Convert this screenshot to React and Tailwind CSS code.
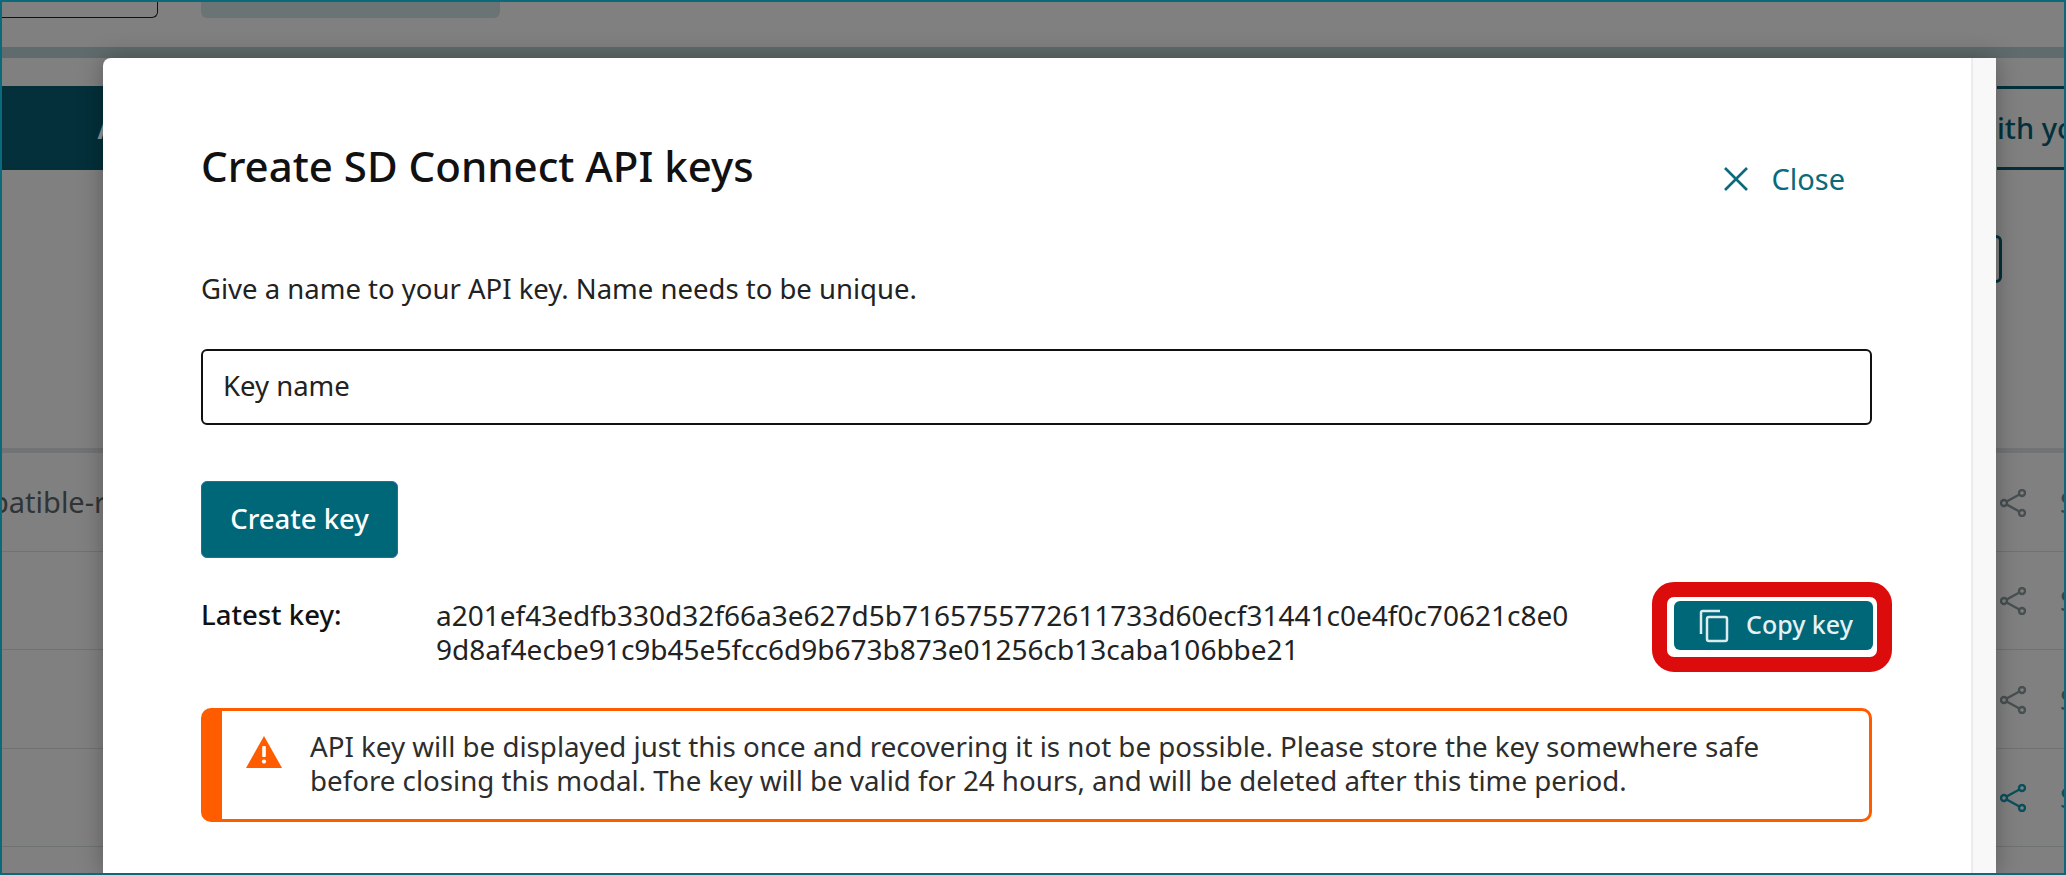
import React from "react";

const fontStack = { fontFamily: '"Noto Sans", "Lato", sans-serif' };

function ShareIcon({ active }) {
  const color = active ? "#0a4f5c" : "#474f51";
  return (
    <svg width="26" height="28" viewBox="0 0 26 28" fill="none" stroke={color} strokeWidth="2.4">
      <circle cx="4" cy="14" r="3" />
      <circle cx="22" cy="4" r="3" />
      <circle cx="22" cy="24" r="3" />
      <path d="M6.6 12.5 19.4 5.5M6.6 15.5l12.8 7" />
    </svg>
  );
}

function TableRow({ text, active }) {
  return (
    <div className="flex h-[98.5px] items-center justify-between border-b border-[#6f7273]">
      <div className="w-[103px] overflow-hidden whitespace-nowrap text-[29px] text-[#2f3536]">
        <div className="-ml-[9px]">{text}</div>
      </div>
      <div className="flex w-[66px] items-center gap-[34px] overflow-hidden pt-[2px]">
        <div className="shrink-0">
          <ShareIcon active={active} />
        </div>
        <span className={`text-[27px] ${active ? "text-[#0a4f5c]" : "text-[#3c4344]"}`}>S</span>
      </div>
    </div>
  );
}

function Backdrop() {
  return (
    <div className="flex h-full flex-col">
      <div className="flex h-[18px] gap-[43px]">
        <div className="w-[158px] rounded-br-md border-r border-b border-[#111]" />
        <div className="w-[299px] rounded-b-md bg-[#6a7475]" />
      </div>
      <div className="mt-[29px] h-[11px] bg-[#5f6b6c]" />
      <div className="mt-[28px] flex h-[84px] justify-between">
        <div className="flex w-[103px] items-center justify-end overflow-hidden bg-[#03303a] text-[29px] font-semibold text-[#8d9a9c]">
          <span className="-mr-[14px]">A</span>
        </div>
        <div className="flex w-[69px] items-center overflow-hidden border-y-[3px] border-[#03303a] text-[29px] font-medium whitespace-nowrap text-[#03303a]">
          <span>ith you</span>
        </div>
      </div>
      <div className="mt-[65px] flex justify-end pr-[64px]">
        <div className="h-[48px] w-[30px] rounded-md border-[3px] border-[#03303a]" />
      </div>
      <div className="mt-[165px] h-[5px] bg-[#717374]" />
      <TableRow text="patible-r" />
      <TableRow />
      <TableRow />
      <TableRow active />
    </div>
  );
}

function CopyIcon() {
  return (
    <svg width="30" height="34" viewBox="0 0 30 34" fill="none" stroke="#dcebee" strokeWidth="2.5">
      <path d="M2 25V3.5C2 2.7 2.7 2 3.5 2H21" />
      <rect x="8" y="8" width="20" height="24" rx="2" />
    </svg>
  );
}

function CloseIcon() {
  return (
    <svg width="28" height="28" viewBox="0 0 28 28" fill="none" stroke="#0a6a7c" strokeWidth="2.6">
      <path d="M3 3l22 22M25 3 3 25" />
    </svg>
  );
}

function WarningIcon() {
  return (
    <svg width="36" height="32" viewBox="0 0 36 32">
      <path d="M18 0 36 32H0Z" fill="#ff5c00" />
      <rect x="16.2" y="10" width="3.6" height="11" rx="1" fill="#fff" />
      <circle cx="18" cy="25.5" r="2.1" fill="#fff" />
    </svg>
  );
}

function Modal() {
  return (
    <div className="absolute top-[58px] left-[103px] flex h-[817px] w-[1893px] overflow-hidden rounded-tl-lg bg-white shadow-[0_0_24px_rgba(0,0,0,0.3)]">
      <div className="w-[1868px] pt-[84px] pr-[99px] pl-[98px]">
        <div className="flex items-start justify-between">
          <h2 className="text-[42px] leading-[48px] font-medium text-[#111]">Create SD Connect API keys</h2>
          <button className="mt-[20px] mr-[27px] flex items-center gap-[21px] text-[29px] leading-[34px] text-[#0a6a7c]">
            <CloseIcon />
            Close
          </button>
        </div>
        <p className="mt-[76px] text-[27.5px] leading-[34px] text-[#222]">Give a name to your API key. Name needs to be unique.</p>
        <div className="mt-[43px] flex h-[76px] items-center rounded-md border-2 border-[#111] px-[20px] pb-[2px] text-[27.5px] text-[#222]">
          Key name
        </div>
        <button className="mt-[56px] h-[77px] w-[197px] rounded-md border border-[#1b6fb0] bg-[#006778] pb-[2px] text-[27.5px] font-medium text-white">
          Create key
        </button>
        <div className="relative mt-[40px] flex text-[28px] leading-[34px] text-[#222]">
          <div className="w-[235px] text-[27.5px] font-medium text-[#111]">Latest key:</div>
          <div>
            <div>a201ef43edfb330d32f66a3e627d5b7165755772611733d60ecf31441c0e4f0c70621c8e0</div>
            <div>9d8af4ecbe91c9b45e5fcc6d9b673b873e01256cb13caba106bbe21</div>
          </div>
          <div className="absolute -top-[16px] right-[-20px] rounded-[22px] border-[15px] border-[#dc0c0c] bg-white p-[4px_4px_7px_7px]">
            <button className="flex h-[49px] w-[199px] items-center gap-[17px] rounded-md bg-[#006778] pl-[25px] text-[25px] font-medium text-[#e6f1f3]">
              <CopyIcon />
              <span className="pb-[3px]">Copy key</span>
            </button>
          </div>
        </div>
        <div className="mt-[42px] flex h-[114px] rounded-[10px] border-[3px] border-l-[21px] border-[#ff5c00] pt-[18px] pl-[24px] text-[27.7px] leading-[34px] text-[#2d2d2d]">
          <div className="mt-[7px] mr-[28px] shrink-0">
            <WarningIcon />
          </div>
          <div>
            <div>API key will be displayed just this once and recovering it is not be possible. Please store the key somewhere safe</div>
            <div>before closing this modal. The key will be valid for 24 hours, and will be deleted after this time period.</div>
          </div>
        </div>
      </div>
      <div className="w-[25px] border-l-2 border-[#ececec] bg-[#f8f8f8]" />
    </div>
  );
}

export default function App() {
  return (
    <div style={fontStack} className="relative h-[875px] w-[2066px] overflow-hidden bg-[#808080]">
      <Backdrop />
      <Modal />
      <div className="pointer-events-none absolute inset-0 border-2 border-[#0a6a7c]" />
    </div>
  );
}
